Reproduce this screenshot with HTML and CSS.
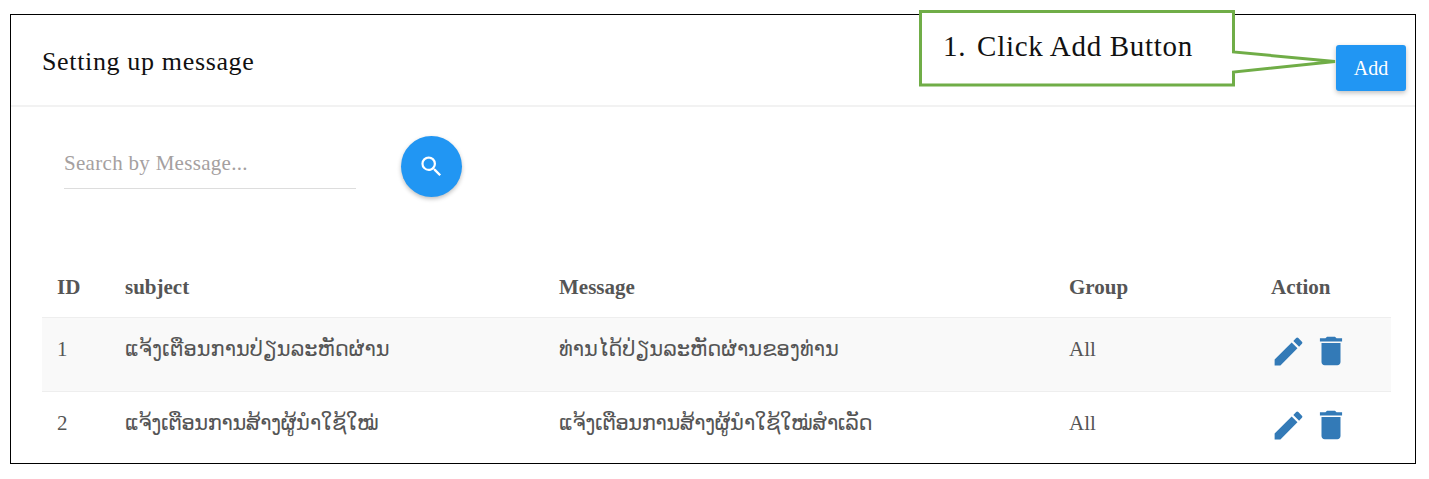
FILE: index.html
```html
<!DOCTYPE html>
<html>
<head>
  <title>Setting up message</title>
  <meta charset="utf-8">
  <link rel="stylesheet" href="styles.css">
</head>
<body>
  <!-- panel -->
  <div class="panel">
    <div class="panel-head">
      <h2 class="panel-title">Setting up message</h2>
      <button class="btn-add">Add</button>
    </div>
    <div class="search-bar">
      <input class="search-input" type="text" placeholder="Search by Message...">
      <button class="btn-search" aria-label="Search">
        <svg width="27" height="27" viewBox="0 0 24 24"><path fill="#fff" d="M15.5 14h-.79l-.28-.27A6.47 6.47 0 0 0 16 9.5 6.5 6.5 0 1 0 9.5 16c1.61 0 3.09-.59 4.23-1.57l.27.28v.79l5 4.99L20.49 19l-4.99-5zm-6 0C7.01 14 5 11.99 5 9.5S7.01 5 9.5 5 14 7.01 14 9.5 11.99 14 9.5 14z"/></svg>
      </button>
    </div>
    <table class="msg-table">
      <colgroup>
        <col class="col-id"><col class="col-subject"><col class="col-message"><col class="col-group"><col class="col-action">
      </colgroup>
      <thead>
        <tr><th>ID</th><th>subject</th><th>Message</th><th>Group</th><th>Action</th></tr>
      </thead>
      <tbody>
        <tr class="row-odd">
          <td>1</td>
          <td lang="lo">ແຈ້ງເຕືອນການປ່ຽນລະຫັດຜ່ານ</td>
          <td lang="lo">ທ່ານໄດ້ປ່ຽນລະຫັດຜ່ານຂອງທ່ານ</td>
          <td>All</td>
          <td class="actions">
            <svg class="icon-edit" viewBox="0 0 24 24"><path d="M3 17.25V21h3.75L17.81 9.94l-3.75-3.75L3 17.25zM20.71 7.04a1 1 0 0 0 0-1.41l-2.34-2.34a1 1 0 0 0-1.41 0l-1.83 1.83 3.75 3.75 1.83-1.83z"/></svg>
            <svg class="icon-trash" viewBox="0 0 24 24"><path d="M6 19c0 1.1.9 2 2 2h8c1.1 0 2-.9 2-2V7H6v12zM19 4h-3.5l-1-1h-5l-1 1H5v2h14V4z"/></svg>
          </td>
        </tr>
        <tr>
          <td>2</td>
          <td lang="lo" class="lao-tight">ແຈ້ງເຕືອນການສ້າງຜູ້ນຳໃຊ້ໃໝ່</td>
          <td lang="lo" class="lao-tight">ແຈ້ງເຕືອນການສ້າງຜູ້ນຳໃຊ້ໃໝ່ສຳເລັດ</td>
          <td>All</td>
          <td class="actions">
            <svg class="icon-edit" viewBox="0 0 24 24"><path d="M3 17.25V21h3.75L17.81 9.94l-3.75-3.75L3 17.25zM20.71 7.04a1 1 0 0 0 0-1.41l-2.34-2.34a1 1 0 0 0-1.41 0l-1.83 1.83 3.75 3.75 1.83-1.83z"/></svg>
            <svg class="icon-trash" viewBox="0 0 24 24"><path d="M6 19c0 1.1.9 2 2 2h8c1.1 0 2-.9 2-2V7H6v12zM19 4h-3.5l-1-1h-5l-1 1H5v2h14V4z"/></svg>
          </td>
        </tr>
      </tbody>
    </table>
  </div>
  <!-- end of panel -->

  <!-- callout over the panel -->
  <div class="callout">
    <svg class="callout-shape" width="420" height="78" viewBox="0 0 420 78">
      <path fill="#fff" stroke="#70ad47" stroke-width="3" d="M1.5 1.5H314.5V42L416 51.5L314.5 62V75H1.5Z"/>
    </svg>
    <span class="callout-text"><span class="callout-num">1.</span> Click Add Button</span>
  </div>
</body>
</html>
```

FILE: styles.css
```css
html, body {
  margin: 0;
  background: #fff;
}
body {
  padding: 14px 13px 15px 10px;
  font-family: "Liberation Serif", "DejaVu Serif", serif;
  color: #555;
}
.panel {
  height: 448px;
  border: 1px solid #000;
}
.panel-head {
  display: flex;
  justify-content: space-between;
  align-items: center;
  height: 90px;
  padding: 0 9px 0 31px;
  border-bottom: 2px solid #f2f2f2;
}
.panel-title {
  margin: 4px 0 0;
  font-size: 26px;
  font-weight: normal;
  letter-spacing: .65px;
  color: #111;
}
.btn-add {
  width: 70px;
  height: 46px;
  margin-top: 15px;
  padding: 2px 0 0;
  border: 0;
  border-radius: 3px;
  background: #2196f3;
  color: #fff;
  font-family: inherit;
  font-size: 20px;
  box-shadow: 0 2px 5px rgba(0, 0, 0, .25);
}
.search-bar {
  display: flex;
  align-items: flex-start;
  padding: 29px 0 0 53px;
  height: 130px;
  box-sizing: border-box;
  margin-bottom: 30px;
}
.search-input {
  width: 292px;
  height: 49px;
  padding: 2px 0 0;
  margin-top: 1px;
  border: 0;
  border-bottom: 1px solid #ddd;
  outline: 0;
  font-family: inherit;
  font-size: 21px;
  letter-spacing: .3px;
  color: #555;
}
.search-input::placeholder {
  color: #a5a0a0;
}
.btn-search {
  display: flex;
  align-items: center;
  justify-content: center;
  width: 61px;
  height: 61px;
  margin-left: 45px;
  padding: 0;
  border: 0;
  border-radius: 50%;
  background: #2196f3;
  box-shadow: 0 2px 4px rgba(0, 0, 0, .25);
}
.msg-table {
  width: 1349px;
  margin-left: 31px;
  border-collapse: collapse;
  table-layout: fixed;
  font-size: 21px;
}
.col-id { width: 68px; }
.col-subject { width: 434px; }
.col-message { width: 510px; }
.col-group { width: 202px; }
.col-action { width: 135px; }
.msg-table th {
  height: 42px;
  padding: 8px 15px 0;
  text-align: left;
  vertical-align: top;
}
.msg-table td {
  height: 62px;
  padding: 0 15px 11px;
  border-top: 1px solid #eee;
  vertical-align: middle;
}
.msg-table td[lang="lo"] {
  font-family: "Liberation Serif", "DejaVu Sans", "Noto Sans", sans-serif;
}
.msg-table .lao-tight {
  letter-spacing: -.4px;
}
.row-odd {
  background: #f9f9f9;
}
.msg-table .actions {
  height: 66px;
  padding-bottom: 7px;
}
.actions svg {
  width: 37px;
  height: 37px;
  fill: #337ab7;
  vertical-align: middle;
}
.actions .icon-edit {
  margin-left: -1px;
}
.actions .icon-trash {
  width: 38px;
  height: 38px;
}
.callout {
  position: absolute;
  top: 10px;
  left: 919px;
  width: 420px;
  height: 78px;
}
.callout-shape {
  display: block;
}
.callout-text {
  position: absolute;
  top: 20px;
  left: 24px;
  font-size: 29px;
  letter-spacing: .7px;
  color: #111;
  white-space: nowrap;
}
.callout-num {
  margin-right: 3px;
}
```
